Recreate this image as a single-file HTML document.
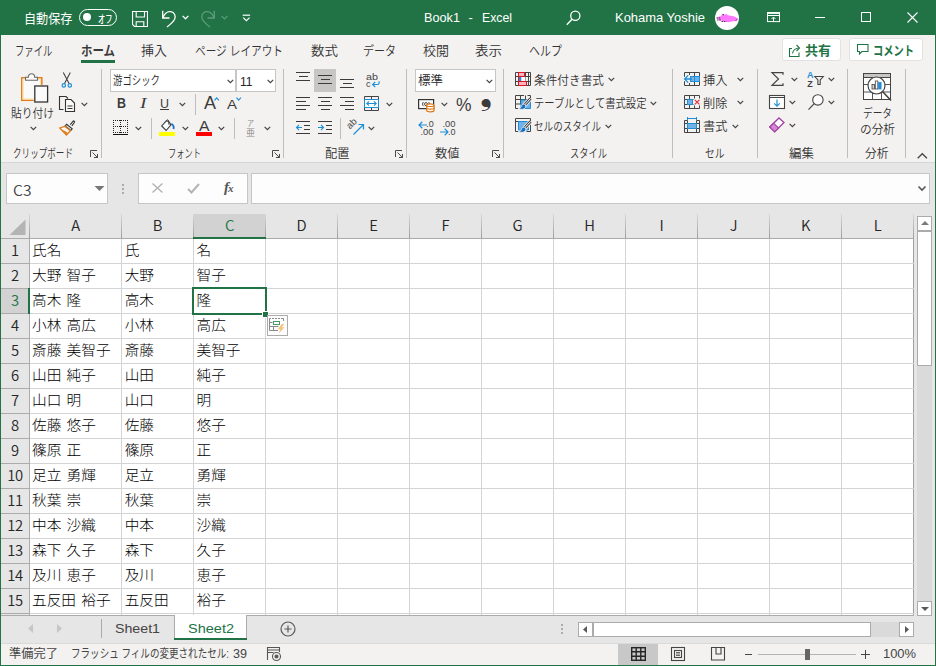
<!DOCTYPE html>
<html lang="ja"><head><meta charset="utf-8"><title>Book1 - Excel</title>
<style>
html,body{margin:0;padding:0;}
body{width:936px;height:666px;overflow:hidden;background:#f3f2f1;font-family:"Liberation Sans","Noto Sans CJK JP",sans-serif;font-size:12px;color:#262626;}
#win{position:relative;width:936px;height:666px;overflow:hidden;background:#f3f2f1;}
.abs{position:absolute;}
.t{position:absolute;white-space:nowrap;line-height:1;transform-origin:0 50%;}
svg{position:absolute;overflow:visible;}
/* title bar */
#title{position:absolute;left:0;top:0;width:936px;height:35px;background:#217346;color:#fff;}
/* tabs */
#tabs{position:absolute;left:0;top:35px;width:936px;height:31px;background:#f3f2f1;}
#tabs .t{font-size:13px;color:#333;font-weight:350;}
/* ribbon */
#ribbon{position:absolute;left:0;top:66px;width:936px;height:96px;background:#f3f2f1;}
#ribbon .t{font-size:12px;color:#333;font-weight:350;}
.sep{position:absolute;width:1px;background:#c8c6c4;}
.caret{position:absolute;}
/* formula bar */
#fbar{position:absolute;left:0;top:162px;width:936px;height:52px;background:#e6e6e6;}
/* grid */
#grid{position:absolute;left:0;top:214px;width:914px;height:401px;background:#fff;overflow:hidden;}
.ch{position:absolute;top:0;height:24px;background:#e6e6e6;font-family:'Noto Sans CJK JP',sans-serif;font-weight:350;font-size:14.8px;line-height:21px;text-align:center;color:#262626;letter-spacing:-0.3px;}
.rh{position:absolute;left:1px;width:28px;height:24px;background:#e6e6e6;font-family:'Noto Sans CJK JP',sans-serif;font-weight:350;font-size:14.8px;line-height:21px;text-align:center;color:#262626;letter-spacing:-0.3px;}
.cell{position:absolute;transform:scaleY(0.95);transform-origin:0 0;word-spacing:1.2px;font-size:14.67px;font-weight:300;line-height:24px;white-space:nowrap;color:#000;font-family:"Liberation Sans","Noto Sans CJK JP",sans-serif;}
.vl{position:absolute;width:1px;background:#d4d4d4;}
.hl{position:absolute;height:1px;background:#d4d4d4;}
/* borders */
.edge{position:absolute;background:#217346;}

</style></head>
<body>
<div id="win">
<div id="title">
  <span class="t" style="transform:scaleX(0.932);left:24px;top:12px;font-size:13px;">自動保存</span>
  <div class="abs" style="left:79px;top:9px;width:36px;height:15px;border:1px solid #fff;border-radius:9px;"></div>
  <div class="abs" style="left:83px;top:13px;width:8px;height:8px;border-radius:50%;background:#fff;"></div>
  <span class="t" style="transform:scaleX(0.690);left:97.5px;top:13.5px;font-size:10.5px;font-weight:500;">オフ</span>
  <!-- save -->
  <svg style="left:132px;top:11px" width="16" height="16" viewBox="0 0 16 16" fill="none" stroke="#fff" stroke-width="1.1">
    <path d="M0.550 0.550h14.900v14.900h-12.900l-2-2z"/><path d="M4.200 0.550v5.500h8.300v-5.500"/><path d="M4.200 15.450v-4.700h7.600v4.700"/>
  </svg>
  <!-- undo -->
  <svg style="left:161px;top:10px" width="16" height="18" viewBox="0 0 16 18" fill="none" stroke="#fff" stroke-width="1.3">
    <path d="M1.700 0.800v7.200h6.800"/><path d="M1.900 7.800C3.500 3.600 6.700 1.200 9.800 1.700c3.600 0.600 5.500 4.300 3.700 7.800C12 12.200 9.300 14.500 6 17"/>
  </svg>
  <svg style="left:182px;top:15px" width="7" height="5" viewBox="0 0 7 5" fill="none" stroke="#fff" stroke-width="1.300"><path d="M0.600 0.900l2.900 2.900l2.900-2.900"/></svg>
  <!-- redo (dim) -->
  <svg style="left:200px;top:10px" width="16" height="18" viewBox="0 0 16 18" fill="none" stroke="#5f9c7c" stroke-width="1.3">
    <path d="M14.300 0.800v7.200h-6.800"/><path d="M14.100 7.800C12.500 3.600 9.300 1.200 6.200 1.700c-3.600 0.600-5.500 4.300-3.700 7.800C4 12.200 6.700 14.500 10 17"/>
  </svg>
  <svg style="left:221px;top:15px" width="7" height="5" viewBox="0 0 7 5" fill="none" stroke="#5f9c7c" stroke-width="1.200"><path d="M0.600 0.900l2.900 2.900l2.900-2.900"/></svg>
  <!-- customize QAT -->
  <svg style="left:242px;top:14px" width="9" height="8" viewBox="0 0 9 8" fill="none" stroke="#fff" stroke-width="1.200"><path d="M0.700 1.200h7.400"/><path d="M1.200 3.600l3.200 3l3.200-3"/></svg>
  <span class="t" style="transform:scaleX(0.976);left:424px;top:11px;font-size:13px;">Book1</span>
  <span class="t" style="left:468.500px;top:11px;font-size:13px;">-</span>
  <span class="t" style="transform:scaleX(0.943);left:481.500px;top:11px;font-size:13px;">Excel</span>
  <!-- search -->
  <svg style="left:566px;top:10px" width="15" height="16" viewBox="0 0 15 16" fill="none" stroke="#fff" stroke-width="1.300"><circle cx="9.300" cy="5.700" r="4.600"/><path d="M6 9.200L0.800 14.800"/></svg>
  <span class="t" style="transform:scaleX(0.996);left:615px;top:11px;font-size:13px;">Kohama Yoshie</span>
  <!-- avatar -->
  <div class="abs" style="left:715px;top:6px;width:24px;height:24px;border-radius:50%;background:#fff;"></div>
  <svg style="left:715px;top:6px" width="24" height="24" viewBox="0 0 24 24"><path d="M1.500 12c0.500-1.500 3-1.200 4.500-1.800c0.500-1 1-2.500 2-2.500c0.800 0 1 1 1.800 1c0.800-0.800 1.500-0.800 2.200 0c1 0.500 2 0.500 3 1c2 0 4 0.500 5.500 1.500c1.500 0.500 3 1.200 3 2.300c-1 1-2.500 1-3.500 1.500c-1.500 0.500-3 0.200-4.500 0.700c-1.500 0.800-3 0.300-4.500 0c-2 0.300-3.500-0.200-4.500-1.200c-1.500 0-3-0.300-4-0.800c0.500-0.500 1-0.600 1.500-0.800c-1-0.200-2-0.300-2.500-0.900z" fill="#ff76ff"/><path d="M1.500 12h4.500M2 14h4M7.500 8.500l1.500 0.500M6.500 15.500h5M20.500 14.500l2-1" stroke="#1a1a1a" stroke-width="0.800" stroke-dasharray="1.500 0.800"/></svg>
  <!-- ribbon display options -->
  <svg style="left:767px;top:12px" width="14" height="11" viewBox="0 0 14 11" fill="none" stroke="#fff" stroke-width="1"><rect x="0.500" y="0.600" width="12" height="9"/><path d="M0.500 1.200h12" stroke-width="1.400"/><path d="M0.500 3.500h12"/><path d="M6.500 9.500v-4M4.500 7l2-2l2 2"/></svg>
  <!-- min / max / close -->
  <div class="abs" style="left:815px;top:17px;width:10px;height:1px;background:#fff;"></div>
  <div class="abs" style="left:861px;top:12px;width:8px;height:8px;border:1px solid #fff;"></div>
  <svg style="left:907px;top:12px" width="11" height="11" viewBox="0 0 11 11" fill="none" stroke="#fff" stroke-width="1.100"><path d="M0.500 0.500l10 10M10.500 0.500l-10 10"/></svg>
</div>

<div id="tabs">
  <span class="t" style="transform:scaleX(0.721);left:14.5px;top:9px;">ファイル</span>
  <span class="t" style="transform:scaleX(0.880);left:81px;top:9px;font-weight:bold;color:#3b3b3b;">ホーム</span>
  <div class="abs" style="left:81px;top:25px;width:34px;height:3px;background:#217346;"></div>
  <span class="t" style="transform:scaleX(0.999);left:141px;top:9px;">挿入</span>
  <span class="t" style="transform:scaleX(0.820);left:195px;top:9px;">ページ レイアウト</span>
  <span class="t" style="transform:scaleX(1.038);left:311px;top:9px;">数式</span>
  <span class="t" style="transform:scaleX(0.846);left:363px;top:9px;">データ</span>
  <span class="t" style="transform:scaleX(0.999);left:423px;top:9px;">校閲</span>
  <span class="t" style="transform:scaleX(1.038);left:475px;top:9px;">表示</span>
  <span class="t" style="transform:scaleX(0.846);left:529px;top:9px;">ヘルプ</span>
  <div class="abs" style="left:782px;top:3px;width:57px;height:21px;background:#fff;border:1px solid #e4e2e0;border-radius:3px;"></div>
  <svg style="left:789px;top:9px" width="13" height="13" viewBox="0 0 13 13" fill="none" stroke="#217346" stroke-width="1.100"><path d="M3 4.500h-2.500v8h9.500v-4"/><path d="M3.500 9.500c0.500-3 2.500-5 6-5.500"/><path d="M7.500 1l3 3l-3 3"/></svg>
  <span class="t" style="transform:scaleX(0.999);left:805px;top:9px;font-weight:bold;color:#217346;">共有</span>
  <div class="abs" style="left:849px;top:3px;width:72px;height:21px;background:#fff;border:1px solid #e4e2e0;border-radius:3px;"></div>
  <svg style="left:857px;top:9px" width="12" height="12" viewBox="0 0 12 12" fill="none" stroke="#217346" stroke-width="1.100"><path d="M0.500 0.500h10.500v7h-6l-2.500 2.500v-2.500h-2z"/></svg>
  <span class="t" style="transform:scaleX(0.788);left:873px;top:9px;font-weight:bold;color:#217346;">コメント</span>
</div>

<div id="ribbon">
<svg style="left:21px;top:7px" width="28" height="30" viewBox="0 0 28 30" fill="none"><rect x="0.8" y="4.8" width="20" height="22.5" fill="#fafafa" stroke="#e07b1a" stroke-width="1.5"/><rect x="2.1" y="6.1" width="17.4" height="19.9" stroke="#fbe0a6" stroke-width="1.2"/><path d="M4.5 7.3v-3h2.8c0-2.2 1.4-3.6 3.2-3.6c1.8 0 3.2 1.4 3.2 3.6h2.8v3z" fill="#fafafa" stroke="#6a6a6a" stroke-width="1.1"/><rect x="12.7" y="11.9" width="15" height="18" fill="#f3f2f1" stroke="none"/><rect x="13.8" y="13" width="12.8" height="16" fill="#fafafa" stroke="#333" stroke-width="1.3"/></svg>
<span class="t" style="transform:scaleX(0.896);left:11px;top:41.8px;font-size:12px;">貼り付け</span>
<svg style="left:30.4px;top:59.9px" width="7" height="5" viewBox="0 0 7 5" fill="none" stroke="#444" stroke-width="1.2"><path d="M0.6 0.8l2.8 2.8l2.8-2.8"/></svg>
<svg style="left:61px;top:6px" width="12" height="16" viewBox="0 0 12 16" fill="none"><path d="M2.3 0.5l5.9 11.3M9.3 0.5l-5.9 11.3" stroke="#444" stroke-width="1.1"/><circle cx="2.8" cy="13.4" r="1.7" stroke="#1e8fd5" stroke-width="1.2"/><circle cx="8.8" cy="13.4" r="1.7" stroke="#1e8fd5" stroke-width="1.2"/></svg>
<svg style="left:59px;top:29.5px" width="16" height="16" viewBox="0 0 16 16" fill="none"><path d="M4.5 13.5h-4v-13h6.5l2 2" stroke="#333" stroke-width="1.1"/><path d="M6.5 3.5h5.5l3.5 3.5v8.5h-9z" fill="#fafafa" stroke="#333" stroke-width="1.1"/><path d="M8.5 10h5M8.5 12.5h5" stroke="#333" stroke-width="1"/></svg>
<svg style="left:81.4px;top:36px" width="7" height="5" viewBox="0 0 7 5" fill="none" stroke="#444" stroke-width="1.2"><path d="M0.6 0.8l2.8 2.8l2.8-2.8"/></svg>
<svg style="left:59px;top:53.5px" width="17" height="16" viewBox="0 0 17 16" fill="none"><path d="M11.3 4.6l2.9-3.5c0.5-0.5 1.7 0.5 1.3 1.1l-2.6 3.7" fill="#fafafa" stroke="#333" stroke-width="1.1"/><path d="M7.6 4.2l5.6 4.6l-1.4 1.7l-5.6-4.6z" fill="#fafafa" stroke="#333" stroke-width="1.1"/><path d="M5.8 6.3l-5 1.7l6.6 7l4-4.2z" fill="#fafafa" stroke="#e07b1a" stroke-width="1.3"/><path d="M2.5 9.2l6 3.3l-1.3 2z" fill="#e07b1a" stroke="none"/></svg>
<span class="t" style="transform:scaleX(0.714);left:13px;top:82px;font-size:12px;">クリップボード</span>
<svg style="left:90px;top:84px" width="8" height="8" viewBox="0 0 8 8" fill="none" stroke="#4a4a4a" stroke-width="1"><path d="M0.5 7v-6.5h6.5"/><path d="M2.5 2.5l5 5M4 7.5h3.5v-3.5"/></svg>
<div class="sep" style="left:101px;top:3px;height:89px;background:#bfbdbb;"></div>
<div class="abs" style="left:110px;top:3px;width:126px;height:23px;background:#fff;border:1px solid #c6c6c6;box-sizing:border-box;"></div>
<div class="abs" style="left:236px;top:3px;width:40px;height:23px;background:#fff;border:1px solid #c6c6c6;box-sizing:border-box;"></div>
<span class="t" style="transform:scaleX(0.752);left:112.5px;top:8.5px;font-size:12.5px;color:#262626;">游ゴシック</span>
<svg style="left:226.7px;top:12.8px" width="7" height="5" viewBox="0 0 7 5" fill="none" stroke="#444" stroke-width="1.2"><path d="M0.6 0.8l2.8 2.8l2.8-2.8"/></svg>
<span class="t" style="transform:scaleX(0.926);left:239.5px;top:8.5px;font-size:13px;color:#262626;">11</span>
<svg style="left:266.7px;top:12.8px" width="7" height="5" viewBox="0 0 7 5" fill="none" stroke="#444" stroke-width="1.2"><path d="M0.6 0.8l2.8 2.8l2.8-2.8"/></svg>
<span class="t" style="transform:scaleX(0.858);left:117px;top:30px;font-size:14.5px;font-weight:bold;color:#3b3b3b;">B</span>
<span class="t" style="transform:scaleX(1.342);left:140px;top:30px;font-size:14.5px;font-style:italic;font-family:'Liberation Serif',serif;color:#3b3b3b;">I</span>
<span class="t" style="transform:scaleX(0.923);left:160px;top:30.5px;font-size:13.5px;color:#3b3b3b;">U</span>
<div class="abs" style="left:160px;top:43px;width:9px;height:1px;background:#3b3b3b;"></div>
<svg style="left:179.3px;top:35.5px" width="7" height="5" viewBox="0 0 7 5" fill="none" stroke="#444" stroke-width="1.2"><path d="M0.6 0.8l2.8 2.8l2.8-2.8"/></svg>
<div class="sep" style="left:195px;top:28px;height:21px;background:#bfbdbb;"></div>
<span class="t" style="transform:scaleX(1.027);left:203.5px;top:28.5px;font-size:17.5px;color:#3b3b3b;">A</span>
<svg style="left:214px;top:30.5px" width="6" height="4" viewBox="0 0 6 4" fill="none"><path d="M0.5 3.4l2.2-2.5l2.2 2.5" stroke="#1e8fd5" stroke-width="1.2"/></svg>
<span class="t" style="transform:scaleX(1.109);left:227px;top:32px;font-size:13.5px;color:#3b3b3b;">A</span>
<svg style="left:236px;top:30.5px" width="6" height="4" viewBox="0 0 6 4" fill="none"><path d="M0.5 0.6l2.2 2.5l2.2-2.5" stroke="#1e8fd5" stroke-width="1.2"/></svg>
<svg style="left:113px;top:54px" width="16" height="16" viewBox="0 0 16 16" fill="none" shape-rendering="crispEdges"><path d="M0 0.5h15M0 6.5h15M0 12.5h15" stroke="#222" stroke-width="1" stroke-dasharray="1 1"/><path d="M0.5 0v13M7.5 0v13M14.5 0v13" stroke="#222" stroke-width="1" stroke-dasharray="1 1"/><path d="M0 14.5h15" stroke="#111" stroke-width="1.3"/></svg>
<svg style="left:135.4px;top:60px" width="7" height="5" viewBox="0 0 7 5" fill="none" stroke="#444" stroke-width="1.2"><path d="M0.6 0.8l2.8 2.8l2.8-2.8"/></svg>
<div class="sep" style="left:151px;top:52px;height:20.5px;background:#bfbdbb;"></div>
<svg style="left:159px;top:53px" width="16" height="17" viewBox="0 0 16 17" fill="none"><path d="M7.3 1.8l-4.6 5.2l4.4 4.5l4.7-5.3c-0.5-2.2-2-4-4.5-4.4z" fill="#fdfdfd" stroke="#3b3b3b" stroke-width="1.1"/><path d="M7.3 1.8c0.5-1.3 2-1.3 2.3 0l0.4 4" stroke="#3b3b3b" stroke-width="1"/><path d="M12.3 4.8c2 1.2 2.8 3 2.2 5.2" stroke="#1a6fc4" stroke-width="1.8"/><rect x="0" y="13" width="16" height="4" fill="#ffff00" stroke="none"/></svg>
<svg style="left:181.5px;top:60px" width="7" height="5" viewBox="0 0 7 5" fill="none" stroke="#444" stroke-width="1.2"><path d="M0.6 0.8l2.8 2.8l2.8-2.8"/></svg>
<span class="t" style="transform:scaleX(1.086);left:199px;top:52.5px;font-size:14.5px;color:#3b3b3b;">A</span>
<div class="abs" style="left:196px;top:66px;width:16px;height:4px;background:#f00;"></div>
<svg style="left:218.4px;top:60px" width="7" height="5" viewBox="0 0 7 5" fill="none" stroke="#444" stroke-width="1.2"><path d="M0.6 0.8l2.8 2.8l2.8-2.8"/></svg>
<div class="sep" style="left:234px;top:52px;height:20.5px;background:#bfbdbb;"></div>
<span class="t" style="transform:scaleX(0.875);left:246.5px;top:54px;font-size:8px;color:#8a8886;">ア</span>
<span class="t" style="transform:scaleX(0.998);left:245.5px;top:62.5px;font-size:9px;color:#8a8886;">亜</span>
<svg style="left:264.2px;top:60px" width="7" height="5" viewBox="0 0 7 5" fill="none" stroke="#444" stroke-width="1.2"><path d="M0.6 0.8l2.8 2.8l2.8-2.8"/></svg>
<span class="t" style="transform:scaleX(0.687);left:168px;top:82px;font-size:12px;">フォント</span>
<svg style="left:272px;top:84px" width="8" height="8" viewBox="0 0 8 8" fill="none" stroke="#4a4a4a" stroke-width="1"><path d="M0.5 7v-6.5h6.5"/><path d="M2.5 2.5l5 5M4 7.5h3.5v-3.5"/></svg>
<div class="sep" style="left:283px;top:3px;height:89px;background:#bfbdbb;"></div>
<div class="abs" style="left:314px;top:3px;width:22px;height:23px;background:#c8c6c4;"></div>
<div class="abs" style="left:296px;top:6px;width:14px;height:1px;background:#3b3b3b;"></div>
<div class="abs" style="left:298.5px;top:10px;width:9.5px;height:1px;background:#3b3b3b;"></div>
<div class="abs" style="left:296px;top:14px;width:14px;height:1px;background:#3b3b3b;"></div>
<div class="abs" style="left:318px;top:9px;width:14px;height:1px;background:#3b3b3b;"></div>
<div class="abs" style="left:320.5px;top:13px;width:9.5px;height:1px;background:#3b3b3b;"></div>
<div class="abs" style="left:318px;top:17px;width:14px;height:1px;background:#3b3b3b;"></div>
<div class="abs" style="left:340px;top:13px;width:14px;height:1px;background:#3b3b3b;"></div>
<div class="abs" style="left:342.5px;top:17px;width:9.5px;height:1px;background:#3b3b3b;"></div>
<div class="abs" style="left:340px;top:21px;width:14px;height:1px;background:#3b3b3b;"></div>
<svg style="left:366px;top:6.5px" width="15" height="16" viewBox="0 0 15 16" fill="none"><text x="0" y="7" font-size="9" fill="#444" stroke="none" font-family="Liberation Sans,sans-serif" textLength="12" lengthAdjust="spacingAndGlyphs">ab</text><text x="0" y="14" font-size="9" fill="#444" stroke="none" font-family="Liberation Sans,sans-serif">c</text><path d="M12.8 8.3c0.8 1.3 0.4 3.2-1.5 3.2h-4.5" stroke="#1e8fd5" stroke-width="1.2"/><path d="M9.3 8.8l-2.7 2.7l2.7 2.7" stroke="#1e8fd5" stroke-width="1.2"/></svg>
<div class="abs" style="left:296px;top:31px;width:14px;height:1px;background:#3b3b3b;"></div>
<div class="abs" style="left:296px;top:35px;width:9.5px;height:1px;background:#3b3b3b;"></div>
<div class="abs" style="left:296px;top:39px;width:14px;height:1px;background:#3b3b3b;"></div>
<div class="abs" style="left:296px;top:43px;width:9.5px;height:1px;background:#3b3b3b;"></div>
<div class="abs" style="left:318px;top:31px;width:14px;height:1px;background:#3b3b3b;"></div>
<div class="abs" style="left:320.5px;top:35px;width:9.5px;height:1px;background:#3b3b3b;"></div>
<div class="abs" style="left:318px;top:39px;width:14px;height:1px;background:#3b3b3b;"></div>
<div class="abs" style="left:320.5px;top:43px;width:9.5px;height:1px;background:#3b3b3b;"></div>
<div class="abs" style="left:340px;top:31px;width:14px;height:1px;background:#3b3b3b;"></div>
<div class="abs" style="left:344.5px;top:35px;width:9.5px;height:1px;background:#3b3b3b;"></div>
<div class="abs" style="left:340px;top:39px;width:14px;height:1px;background:#3b3b3b;"></div>
<div class="abs" style="left:344.5px;top:43px;width:9.5px;height:1px;background:#3b3b3b;"></div>
<svg style="left:364px;top:30px" width="15" height="15" viewBox="0 0 15 15" fill="none"><path d="M0.5 3.5v-3h14v3M0.5 11.5v3h14v-3M7.5 0.5v3M7.5 11.5v3" stroke="#444" stroke-width="1"/><rect x="0.5" y="3.5" width="14" height="8" fill="#fdfdfd" stroke="#1e8fd5" stroke-width="1"/><path d="M2.8 7.5h9.4M5 5.3l-2.2 2.2l2.2 2.2M10 5.3l2.2 2.2l-2.2 2.2" stroke="#1e8fd5" stroke-width="1.1"/></svg>
<svg style="left:386.4px;top:35.7px" width="7" height="5" viewBox="0 0 7 5" fill="none" stroke="#444" stroke-width="1.2"><path d="M0.6 0.8l2.8 2.8l2.8-2.8"/></svg>
<div class="abs" style="left:296px;top:55px;width:14px;height:1px;background:#3b3b3b;"></div>
<div class="abs" style="left:304px;top:59px;width:6px;height:1px;background:#3b3b3b;"></div>
<div class="abs" style="left:304px;top:63px;width:6px;height:1px;background:#3b3b3b;"></div>
<div class="abs" style="left:296px;top:67px;width:14px;height:1px;background:#3b3b3b;"></div>
<svg style="left:296px;top:58px" width="7" height="8" viewBox="0 0 7 8" fill="none"><path d="M0.6 3.5h5.4M3 1l-2.5 2.5l2.5 2.5" stroke="#1e8fd5" stroke-width="1.1"/></svg>
<div class="abs" style="left:318px;top:55px;width:14px;height:1px;background:#3b3b3b;"></div>
<div class="abs" style="left:326px;top:59px;width:6px;height:1px;background:#3b3b3b;"></div>
<div class="abs" style="left:326px;top:63px;width:6px;height:1px;background:#3b3b3b;"></div>
<div class="abs" style="left:318px;top:67px;width:14px;height:1px;background:#3b3b3b;"></div>
<svg style="left:318px;top:58px" width="7" height="8" viewBox="0 0 7 8" fill="none"><path d="M0 3.5h5.4M3 1l2.5 2.5l-2.5 2.5" stroke="#1e8fd5" stroke-width="1.1"/></svg>
<div class="sep" style="left:340px;top:52px;height:20.5px;background:#bfbdbb;"></div>
<svg style="left:347px;top:53px" width="18" height="17" viewBox="0 0 18 17" fill="none"><text x="0" y="0" font-size="9.5" fill="#444" stroke="none" font-family="Liberation Sans,sans-serif" transform="translate(3,10.5) rotate(-45)">ab</text><path d="M6.5 15.5l9.5-9.5M11.5 5.5h5v5" stroke="#1e8fd5" stroke-width="1.2"/></svg>
<svg style="left:368.4px;top:59.7px" width="7" height="5" viewBox="0 0 7 5" fill="none" stroke="#444" stroke-width="1.2"><path d="M0.6 0.8l2.8 2.8l2.8-2.8"/></svg>
<span class="t" style="transform:scaleX(1.020);left:325px;top:82px;font-size:12px;">配置</span>
<svg style="left:395px;top:84px" width="8" height="8" viewBox="0 0 8 8" fill="none" stroke="#4a4a4a" stroke-width="1"><path d="M0.5 7v-6.5h6.5"/><path d="M2.5 2.5l5 5M4 7.5h3.5v-3.5"/></svg>
<div class="sep" style="left:406px;top:3px;height:89px;background:#bfbdbb;"></div>
<div class="abs" style="left:415px;top:3px;width:81px;height:23px;background:#fff;border:1px solid #c6c6c6;box-sizing:border-box;"></div>
<span class="t" style="transform:scaleX(0.999);left:417.5px;top:8.5px;font-size:12.5px;color:#262626;">標準</span>
<svg style="left:486.2px;top:12.8px" width="7" height="5" viewBox="0 0 7 5" fill="none" stroke="#444" stroke-width="1.2"><path d="M0.6 0.8l2.8 2.8l2.8-2.8"/></svg>
<svg style="left:417.5px;top:32.5px" width="17" height="14" viewBox="0 0 17 14" fill="none"><rect x="0.6" y="0.6" width="15" height="9" stroke="#333" stroke-width="1.2" fill="#fdfdfd"/><path d="M5.5 3c-1.2 0.8-1.2 3.4 0 4.2M10.5 3c1.2 0.8 1.2 3.4 0 4.2" stroke="#333" stroke-width="0.9"/><circle cx="8" cy="5.1" r="1.5" stroke="#333" stroke-width="0.9"/><path d="M8.7 6.2c0-1.7 7.3-1.7 7.3 0v5.3c0 1.7-7.3 1.7-7.3 0z" fill="#fff" stroke="#e0730d" stroke-width="1.2"/><path d="M8.7 6.4c0 1.5 7.3 1.5 7.3 0M8.7 9c0 1.5 7.3 1.5 7.3 0" stroke="#e0730d" stroke-width="1.1"/></svg>
<svg style="left:440.5px;top:36px" width="7" height="5" viewBox="0 0 7 5" fill="none" stroke="#444" stroke-width="1.2"><path d="M0.6 0.8l2.8 2.8l2.8-2.8"/></svg>
<span class="t" style="transform:scaleX(0.942);left:455.5px;top:29.5px;font-size:18.5px;color:#3b3b3b;">%</span>
<span class="t" style="left:479.8px;top:12.5px;font-size:31px;font-family:'DejaVu Sans',sans-serif;color:#3b3b3b;">❟</span>
<svg style="left:417.5px;top:53.5px" width="17" height="16" viewBox="0 0 17 16" fill="none"><path d="M1 5h8M4.3 1.8l-3.3 3.2l3.3 3.2" stroke="#1e8fd5" stroke-width="1.2"/><text x="8.3" y="7.3" font-size="9" fill="#444" stroke="none" font-family="Liberation Sans,sans-serif" textLength="7.5" lengthAdjust="spacingAndGlyphs">.0</text><text x="2.5" y="15.3" font-size="9" fill="#444" stroke="none" font-family="Liberation Sans,sans-serif" textLength="13" lengthAdjust="spacingAndGlyphs">.00</text></svg>
<svg style="left:440px;top:53.5px" width="17" height="16" viewBox="0 0 17 16" fill="none"><text x="2.5" y="7.3" font-size="9" fill="#444" stroke="none" font-family="Liberation Sans,sans-serif" textLength="13" lengthAdjust="spacingAndGlyphs">.00</text><path d="M0 12h8M4.7 8.8l3.3 3.2l-3.3 3.2" stroke="#1e8fd5" stroke-width="1.2"/><text x="8" y="15.3" font-size="9" fill="#444" stroke="none" font-family="Liberation Sans,sans-serif" textLength="7.5" lengthAdjust="spacingAndGlyphs">.0</text></svg>
<span class="t" style="transform:scaleX(1.020);left:434.5px;top:82px;font-size:12px;">数値</span>
<svg style="left:492px;top:84px" width="8" height="8" viewBox="0 0 8 8" fill="none" stroke="#4a4a4a" stroke-width="1"><path d="M0.5 7v-6.5h6.5"/><path d="M2.5 2.5l5 5M4 7.5h3.5v-3.5"/></svg>
<div class="sep" style="left:503px;top:3px;height:89px;background:#bfbdbb;"></div>
<svg style="left:515px;top:6px" width="16" height="14" viewBox="0 0 16 14" fill="none"><path d="M0.5 0.5h15v13h-15zM0.5 4.5h15M0.5 9.5h15M3.5 0.5v13M10.5 0.5v13M13.5 0.5v13" stroke="#444" stroke-width="1"/><rect x="4" y="1" width="5" height="3" fill="#f9b4bd" stroke="none"/><rect x="4" y="10" width="7" height="3" fill="#f9b4bd" stroke="none"/><rect x="4" y="5" width="2.5" height="4" fill="#1e8fd5" stroke="none"/><rect x="6.5" y="5" width="4" height="4" fill="#fff" stroke="none"/><path d="M3.5 0.5h6v4h-6zM3.5 4.5v5M3.5 9.5h8v4h-8z" stroke="#e81123" stroke-width="1"/></svg>
<span class="t" style="transform:scaleX(0.972);left:533.5px;top:8.5px;font-size:12px;">条件付き書式</span>
<svg style="left:607.9px;top:11px" width="7" height="5" viewBox="0 0 7 5" fill="none" stroke="#444" stroke-width="1.2"><path d="M0.6 0.8l2.8 2.8l2.8-2.8"/></svg>
<svg style="left:515px;top:29px" width="16" height="15" viewBox="0 0 16 15" fill="none"><path d="M9 0.5h-8.5v13h3M0.5 4.5h12M0.5 9h5M5.5 0.5v9M10.5 0.5v4M12.5 0.5h3v3" stroke="#444" stroke-width="1"/><path d="M6 5h9.5v8.5h-9.5z" fill="#6fb1e8" stroke="#1e8fd5" stroke-width="1"/><path d="M15.6 3.4l-6 6.6" stroke="#f3f2f1" stroke-width="4.4"/><path d="M15.6 3.4l-6 6.6" stroke="#444" stroke-width="2.8"/><path d="M15.6 3.4l-6 6.6" stroke="#fff" stroke-width="1"/><path d="M9.6 9.2c-2-0.5-3 1-3.2 2.2c-0.3 1.2-1.5 1.8-3.2 2c2.5 1.5 5.8 1.2 7.1-0.5c0.8-1 0.7-2.7-0.7-3.7z" fill="#1b6ec2" stroke="#f3f2f1" stroke-width="0.8"/></svg>
<span class="t" style="transform:scaleX(0.859);left:533.5px;top:32px;font-size:12px;">テーブルとして書式設定</span>
<svg style="left:650.3px;top:34.7px" width="7" height="5" viewBox="0 0 7 5" fill="none" stroke="#444" stroke-width="1.2"><path d="M0.6 0.8l2.8 2.8l2.8-2.8"/></svg>
<svg style="left:515px;top:52px" width="16" height="15" viewBox="0 0 16 15" fill="none"><path d="M0.5 0.5h15v13h-4M4 13.5h-3.5v-13M0.5 3.5h15" stroke="#444" stroke-width="1"/><path d="M3.5 3.5h10v8.5h-10z" fill="#6fb1e8" stroke="#1e8fd5" stroke-width="1"/><path d="M15.6 3.4l-6 6.6" stroke="#f3f2f1" stroke-width="4.4"/><path d="M15.6 3.4l-6 6.6" stroke="#444" stroke-width="2.8"/><path d="M15.6 3.4l-6 6.6" stroke="#fff" stroke-width="1"/><path d="M9.6 9.2c-2-0.5-3 1-3.2 2.2c-0.3 1.2-1.5 1.8-3.2 2c2.5 1.5 5.8 1.2 7.1-0.5c0.8-1 0.7-2.7-0.7-3.7z" fill="#1b6ec2" stroke="#f3f2f1" stroke-width="0.8"/></svg>
<span class="t" style="transform:scaleX(0.797);left:533.5px;top:55px;font-size:12px;">セルのスタイル</span>
<svg style="left:604.9px;top:57.7px" width="7" height="5" viewBox="0 0 7 5" fill="none" stroke="#444" stroke-width="1.2"><path d="M0.6 0.8l2.8 2.8l2.8-2.8"/></svg>
<span class="t" style="transform:scaleX(0.771);left:569.5px;top:82px;font-size:12px;">スタイル</span>
<div class="sep" style="left:672px;top:3px;height:89px;background:#bfbdbb;"></div>
<svg style="left:684px;top:6px" width="16" height="14" viewBox="0 0 16 14" fill="none"><path d="M0.5 4.5v-4h15v4M5.5 0.5v4M10.5 0.5v4M0.5 9.5v4h15v-4M5.5 9.5v4M10.5 9.5v4M0.5 9.5h1M0.5 4.5h1" stroke="#444" stroke-width="1"/><rect x="1" y="3" width="5" height="8" fill="#f3f2f1" stroke="none"/><rect x="6.5" y="4.5" width="9" height="5" fill="#6fb1e8" stroke="#1e8fd5" stroke-width="1"/><path d="M10.5 4.5v5" stroke="#1e8fd5" stroke-width="1"/><path d="M0.9 7h7M4.2 3.4l-3.6 3.6l3.6 3.6" stroke="#1e8fd5" stroke-width="1.3"/></svg>
<span class="t" style="transform:scaleX(1.020);left:703px;top:8.5px;font-size:12px;">挿入</span>
<svg style="left:737.4px;top:10.9px" width="7" height="5" viewBox="0 0 7 5" fill="none" stroke="#444" stroke-width="1.2"><path d="M0.6 0.8l2.8 2.8l2.8-2.8"/></svg>
<svg style="left:684px;top:29px" width="16" height="14" viewBox="0 0 16 14" fill="none"><path d="M0.5 4.5v-4h15v4M5.5 0.5v4M10.5 0.5v4M0.5 9.5v4h15v-4M5.5 9.5v4M10.5 9.5v4M0.5 4.5v5M0.5 9.5h15M0.5 4.5h15" stroke="#444" stroke-width="1"/><rect x="9.5" y="3.5" width="7" height="7" fill="#f3f2f1" stroke="none"/><rect x="3.5" y="4.5" width="5" height="5" fill="#6fb1e8" stroke="#1e8fd5" stroke-width="1"/><path d="M10.8 4.8l4.6 4.6M15.4 4.8l-4.6 4.6" stroke="#e8323c" stroke-width="1.2"/></svg>
<span class="t" style="transform:scaleX(1.020);left:703px;top:32px;font-size:12px;">削除</span>
<svg style="left:737.4px;top:33.9px" width="7" height="5" viewBox="0 0 7 5" fill="none" stroke="#444" stroke-width="1.2"><path d="M0.6 0.8l2.8 2.8l2.8-2.8"/></svg>
<svg style="left:684px;top:51px" width="16" height="16" viewBox="0 0 16 16" fill="none"><path d="M3.5 1.5h9M3.5 0v3M12.5 0v3" stroke="#1e8fd5" stroke-width="1"/><path d="M3.5 3.5h-3v12h15v-12h-3M0.5 6.5h15M0.5 11.5h15M3.5 3.5v12M12.5 3.5v12" stroke="#444" stroke-width="1"/><rect x="3.5" y="6.5" width="9" height="5" fill="#6fb1e8" stroke="#1e8fd5" stroke-width="1"/></svg>
<span class="t" style="transform:scaleX(1.020);left:703px;top:55px;font-size:12px;">書式</span>
<svg style="left:731.6px;top:58px" width="7" height="5" viewBox="0 0 7 5" fill="none" stroke="#444" stroke-width="1.2"><path d="M0.6 0.8l2.8 2.8l2.8-2.8"/></svg>
<span class="t" style="transform:scaleX(0.812);left:705px;top:82px;font-size:12px;">セル</span>
<div class="sep" style="left:757px;top:3px;height:89px;background:#bfbdbb;"></div>
<svg style="left:770.5px;top:6px" width="13" height="14" viewBox="0 0 13 14" fill="none"><path d="M12 2.8v-2.1h-11l6.5 6.3l-6.5 6.3h11v-2.1" stroke="#444" stroke-width="1.2"/></svg>
<svg style="left:791.4px;top:10.9px" width="7" height="5" viewBox="0 0 7 5" fill="none" stroke="#444" stroke-width="1.2"><path d="M0.6 0.8l2.8 2.8l2.8-2.8"/></svg>
<svg style="left:806.5px;top:4.5px" width="18" height="17" viewBox="0 0 18 17" fill="none"><text x="0" y="7" font-size="9" font-weight="bold" fill="#1e8fd5" stroke="none" font-family="Liberation Sans,sans-serif">A</text><text x="0.3" y="16" font-size="9" font-weight="bold" fill="#444" stroke="none" font-family="Liberation Sans,sans-serif">Z</text><path d="M7.8 5.5h8.5l-3.1 3.5v4.5h-2.3v-4.5z" stroke="#444" stroke-width="1.1"/></svg>
<svg style="left:827.7px;top:10.9px" width="7" height="5" viewBox="0 0 7 5" fill="none" stroke="#444" stroke-width="1.2"><path d="M0.6 0.8l2.8 2.8l2.8-2.8"/></svg>
<svg style="left:769px;top:29px" width="16" height="14" viewBox="0 0 16 14" fill="none"><rect x="0.5" y="0.5" width="15" height="13" stroke="#444" stroke-width="1.1" fill="#fff"/><path d="M0.5 2.5h15" stroke="#444" stroke-width="1"/><path d="M8 4.5v6.5M5.2 8.3l2.8 2.8l2.8-2.8" stroke="#1e8fd5" stroke-width="1.2"/></svg>
<svg style="left:789.1px;top:33.9px" width="7" height="5" viewBox="0 0 7 5" fill="none" stroke="#444" stroke-width="1.2"><path d="M0.6 0.8l2.8 2.8l2.8-2.8"/></svg>
<svg style="left:807.5px;top:27.5px" width="17" height="17" viewBox="0 0 17 17" fill="none"><circle cx="9.9" cy="5.9" r="5.2" stroke="#444" stroke-width="1.1" fill="#fdfdfd"/><path d="M6.2 9.7l-5.7 5.9" stroke="#444" stroke-width="1.2"/></svg>
<svg style="left:827.7px;top:33.9px" width="7" height="5" viewBox="0 0 7 5" fill="none" stroke="#444" stroke-width="1.2"><path d="M0.6 0.8l2.8 2.8l2.8-2.8"/></svg>
<svg style="left:769px;top:51px" width="16" height="16" viewBox="0 0 16 16" fill="none"><path d="M0.8 10l9.2-9l5 4.5l-9.3 9.3z" fill="#fdfdfd" stroke="#a240a2" stroke-width="1.3"/><path d="M0.8 10l3.8-3.8l5 4.8l-3.9 3.8z" fill="#d587d5" stroke="#a240a2" stroke-width="1.1"/></svg>
<svg style="left:789.1px;top:57px" width="7" height="5" viewBox="0 0 7 5" fill="none" stroke="#444" stroke-width="1.2"><path d="M0.6 0.8l2.8 2.8l2.8-2.8"/></svg>
<span class="t" style="transform:scaleX(1.041);left:789px;top:82px;font-size:12px;">編集</span>
<div class="sep" style="left:847px;top:3px;height:89px;background:#bfbdbb;"></div>
<svg style="left:862.5px;top:6.5px" width="29" height="29" viewBox="0 0 29 29" fill="none"><rect x="0.5" y="0.5" width="27" height="26" stroke="#444" stroke-width="1" fill="#fff"/><rect x="0.5" y="0.5" width="27" height="4" fill="#c8c6c4" stroke="#444" stroke-width="1"/><path d="M0.5 11.5h27M0.5 19h27M9.5 4.5v22M18.5 4.5v22" stroke="#444" stroke-width="0.9"/><circle cx="13.5" cy="12.5" r="8.5" fill="#fff" stroke="#444" stroke-width="1.2"/><rect x="9" y="11.5" width="2.5" height="4.5" fill="#d0d0d0" stroke="#444" stroke-width="0.8"/><rect x="12.3" y="8" width="2.5" height="8" fill="#fff" stroke="#444" stroke-width="0.8"/><rect x="15.6" y="9.5" width="2.5" height="6.5" fill="#2b88d8" stroke="#1e8fd5" stroke-width="0.8"/><path d="M19.5 18.5l8.5 9" stroke="#444" stroke-width="1.6"/></svg>
<span class="t" style="transform:scaleX(0.805);left:862.5px;top:42px;font-size:12px;">データ</span>
<span class="t" style="transform:scaleX(0.972);left:859.5px;top:57.5px;font-size:12px;">の分析</span>
<span class="t" style="transform:scaleX(0.979);left:864.5px;top:82px;font-size:12px;">分析</span>
<div class="sep" style="left:905px;top:3px;height:89px;background:#bfbdbb;"></div>
<svg style="left:916.5px;top:86.5px" width="11" height="6" viewBox="0 0 11 6" fill="none"><path d="M0.7 5.3l4.6-4.6l4.6 4.6" stroke="#444" stroke-width="1.3"/></svg>
</div>
<div id="fbar">
  <div class="abs" style="left:0;top:0;width:936px;height:1px;background:#d6d6d6;"></div>
  <!-- name box -->
  <div class="abs" style="left:6px;top:11px;width:100px;height:29px;background:#fdfdfd;border:1px solid #c6c6c6;"></div>
  <span class="t" style="transform:scaleX(1.042);left:13px;top:19.5px;font-size:15px;font-family:'Noto Sans CJK JP',sans-serif;font-weight:350;color:#444;">C3</span>
  <svg style="left:94px;top:24px" width="11" height="5" viewBox="0 0 11 5"><path d="M0.500 0h10l-5 5z" fill="#777"/></svg>
  <div class="abs" style="left:122px;top:22px;width:2px;height:2px;background:#ababab;"></div>
  <div class="abs" style="left:122px;top:26px;width:2px;height:2px;background:#ababab;"></div>
  <div class="abs" style="left:122px;top:30px;width:2px;height:2px;background:#ababab;"></div>
  <!-- buttons -->
  <div class="abs" style="left:138px;top:11px;width:108px;height:29px;background:#fdfdfd;border:1px solid #c6c6c6;"></div>
  <svg style="left:151.5px;top:21px" width="11" height="10" viewBox="0 0 11 10" fill="none" stroke="#b4b4b4" stroke-width="1.500"><path d="M0.500 0.500l10 9M10.500 0.500l-10 9"/></svg>
  <svg style="left:187px;top:21px" width="13" height="11" viewBox="0 0 13 11" fill="none" stroke="#b4b4b4" stroke-width="2"><path d="M1 6l3.500 3.500l7.500-8.500"/></svg>
  <span class="t" style="left:224px;top:18px;font-size:15px;font-family:'Liberation Serif',serif;font-style:italic;font-weight:bold;color:#555;letter-spacing:-1px;">f<span style="font-size:11px;">x</span></span>
  <!-- formula input -->
  <div class="abs" style="left:251px;top:11px;width:677px;height:29px;background:#fdfdfd;border:1px solid #c6c6c6;"></div>
  <svg style="left:918px;top:24px" width="8" height="5" viewBox="0 0 8 5" fill="none" stroke="#555" stroke-width="1.600"><path d="M0.500 0.500l3.500 3.500l3.500-3.500"/></svg>
</div>

<div id="grid">
<div class="abs" style="left:0;top:0;width:914px;height:24px;background:#e6e6e6;"></div>
<div class="abs" style="left:1px;top:24px;width:28px;height:377px;background:#e6e6e6;"></div>
<svg style="left:9px;top:5px" width="17" height="16" viewBox="0 0 17 16"><path d="M16.500 0.500v15.500h-16z" fill="#b4b4b4"/></svg>
<div class="abs" style="left:194px;top:0;width:71px;height:24px;background:#d2d2d2;"></div>
<div class="abs" style="left:1px;top:75px;width:28px;height:24px;background:#d2d2d2;"></div>
<div class="ch" style="left:30px;width:91px;background:none;">A</div>
<div class="ch" style="left:122px;width:71px;background:none;">B</div>
<div class="ch" style="left:194px;width:71px;background:none;color:#217346;">C</div>
<div class="ch" style="left:266px;width:71px;background:none;">D</div>
<div class="ch" style="left:338px;width:71px;background:none;">E</div>
<div class="ch" style="left:410px;width:71px;background:none;">F</div>
<div class="ch" style="left:482px;width:71px;background:none;">G</div>
<div class="ch" style="left:554px;width:71px;background:none;">H</div>
<div class="ch" style="left:626px;width:71px;background:none;">I</div>
<div class="ch" style="left:698px;width:71px;background:none;">J</div>
<div class="ch" style="left:770px;width:71px;background:none;">K</div>
<div class="ch" style="left:842px;width:71px;background:none;">L</div>
<div class="vl" style="left:29px;top:0;height:24px;background:linear-gradient(#d8d8d8,#9c9c9c);"></div>
<div class="vl" style="left:121px;top:0;height:24px;background:linear-gradient(#d8d8d8,#9c9c9c);"></div>
<div class="vl" style="left:193px;top:0;height:24px;background:linear-gradient(#d8d8d8,#9c9c9c);"></div>
<div class="vl" style="left:265px;top:0;height:24px;background:linear-gradient(#d8d8d8,#9c9c9c);"></div>
<div class="vl" style="left:337px;top:0;height:24px;background:linear-gradient(#d8d8d8,#9c9c9c);"></div>
<div class="vl" style="left:409px;top:0;height:24px;background:linear-gradient(#d8d8d8,#9c9c9c);"></div>
<div class="vl" style="left:481px;top:0;height:24px;background:linear-gradient(#d8d8d8,#9c9c9c);"></div>
<div class="vl" style="left:553px;top:0;height:24px;background:linear-gradient(#d8d8d8,#9c9c9c);"></div>
<div class="vl" style="left:625px;top:0;height:24px;background:linear-gradient(#d8d8d8,#9c9c9c);"></div>
<div class="vl" style="left:697px;top:0;height:24px;background:linear-gradient(#d8d8d8,#9c9c9c);"></div>
<div class="vl" style="left:769px;top:0;height:24px;background:linear-gradient(#d8d8d8,#9c9c9c);"></div>
<div class="vl" style="left:841px;top:0;height:24px;background:linear-gradient(#d8d8d8,#9c9c9c);"></div>
<div class="vl" style="left:913px;top:0;height:24px;background:linear-gradient(#d8d8d8,#9c9c9c);"></div>
<div class="hl" style="left:1px;top:24px;width:913px;background:#ababab;"></div>
<div class="vl" style="left:121px;top:25px;height:376px;"></div>
<div class="vl" style="left:193px;top:25px;height:376px;"></div>
<div class="vl" style="left:265px;top:25px;height:376px;"></div>
<div class="vl" style="left:337px;top:25px;height:376px;"></div>
<div class="vl" style="left:409px;top:25px;height:376px;"></div>
<div class="vl" style="left:481px;top:25px;height:376px;"></div>
<div class="vl" style="left:553px;top:25px;height:376px;"></div>
<div class="vl" style="left:625px;top:25px;height:376px;"></div>
<div class="vl" style="left:697px;top:25px;height:376px;"></div>
<div class="vl" style="left:769px;top:25px;height:376px;"></div>
<div class="vl" style="left:841px;top:25px;height:376px;"></div>
<div class="vl" style="left:913px;top:25px;height:376px;background:#a0a0a0;"></div>
<div class="vl" style="left:29px;top:25px;height:376px;background:#ababab;"></div>
<div class="hl" style="left:30px;top:49px;width:884px;"></div>
<div class="hl" style="left:1px;top:49px;width:28px;background:#ababab;"></div>
<div class="hl" style="left:30px;top:74px;width:884px;"></div>
<div class="hl" style="left:1px;top:74px;width:28px;background:#ababab;"></div>
<div class="hl" style="left:30px;top:99px;width:884px;"></div>
<div class="hl" style="left:1px;top:99px;width:28px;background:#ababab;"></div>
<div class="hl" style="left:30px;top:124px;width:884px;"></div>
<div class="hl" style="left:1px;top:124px;width:28px;background:#ababab;"></div>
<div class="hl" style="left:30px;top:149px;width:884px;"></div>
<div class="hl" style="left:1px;top:149px;width:28px;background:#ababab;"></div>
<div class="hl" style="left:30px;top:174px;width:884px;"></div>
<div class="hl" style="left:1px;top:174px;width:28px;background:#ababab;"></div>
<div class="hl" style="left:30px;top:199px;width:884px;"></div>
<div class="hl" style="left:1px;top:199px;width:28px;background:#ababab;"></div>
<div class="hl" style="left:30px;top:224px;width:884px;"></div>
<div class="hl" style="left:1px;top:224px;width:28px;background:#ababab;"></div>
<div class="hl" style="left:30px;top:249px;width:884px;"></div>
<div class="hl" style="left:1px;top:249px;width:28px;background:#ababab;"></div>
<div class="hl" style="left:30px;top:274px;width:884px;"></div>
<div class="hl" style="left:1px;top:274px;width:28px;background:#ababab;"></div>
<div class="hl" style="left:30px;top:299px;width:884px;"></div>
<div class="hl" style="left:1px;top:299px;width:28px;background:#ababab;"></div>
<div class="hl" style="left:30px;top:324px;width:884px;"></div>
<div class="hl" style="left:1px;top:324px;width:28px;background:#ababab;"></div>
<div class="hl" style="left:30px;top:349px;width:884px;"></div>
<div class="hl" style="left:1px;top:349px;width:28px;background:#ababab;"></div>
<div class="hl" style="left:30px;top:374px;width:884px;"></div>
<div class="hl" style="left:1px;top:374px;width:28px;background:#ababab;"></div>
<div class="hl" style="left:30px;top:399px;width:884px;"></div>
<div class="hl" style="left:1px;top:399px;width:28px;background:#ababab;"></div>
<div class="rh" style="top:25px;background:none;">1</div>
<div class="rh" style="top:50px;background:none;">2</div>
<div class="rh" style="top:75px;background:none;color:#217346;">3</div>
<div class="rh" style="top:100px;background:none;">4</div>
<div class="rh" style="top:125px;background:none;">5</div>
<div class="rh" style="top:150px;background:none;">6</div>
<div class="rh" style="top:175px;background:none;">7</div>
<div class="rh" style="top:200px;background:none;">8</div>
<div class="rh" style="top:225px;background:none;">9</div>
<div class="rh" style="top:250px;background:none;">10</div>
<div class="rh" style="top:275px;background:none;">11</div>
<div class="rh" style="top:300px;background:none;">12</div>
<div class="rh" style="top:325px;background:none;">13</div>
<div class="rh" style="top:350px;background:none;">14</div>
<div class="rh" style="top:375px;background:none;">15</div>
<span class="cell" style="left:32px;top:25px;">氏名</span>
<span class="cell" style="left:124.7px;top:25px;">氏</span>
<span class="cell" style="left:196.5px;top:25px;">名</span>
<span class="cell" style="left:32px;top:50px;">大野 智子</span>
<span class="cell" style="left:124.7px;top:50px;">大野</span>
<span class="cell" style="left:196.5px;top:50px;">智子</span>
<span class="cell" style="left:32px;top:75px;">高木 隆</span>
<span class="cell" style="left:124.7px;top:75px;">高木</span>
<span class="cell" style="left:196.5px;top:75px;">隆</span>
<span class="cell" style="left:32px;top:100px;">小林 高広</span>
<span class="cell" style="left:124.7px;top:100px;">小林</span>
<span class="cell" style="left:196.5px;top:100px;">高広</span>
<span class="cell" style="left:32px;top:125px;">斎藤 美智子</span>
<span class="cell" style="left:124.7px;top:125px;">斎藤</span>
<span class="cell" style="left:196.5px;top:125px;">美智子</span>
<span class="cell" style="left:32px;top:150px;">山田 純子</span>
<span class="cell" style="left:124.7px;top:150px;">山田</span>
<span class="cell" style="left:196.5px;top:150px;">純子</span>
<span class="cell" style="left:32px;top:175px;">山口 明</span>
<span class="cell" style="left:124.7px;top:175px;">山口</span>
<span class="cell" style="left:196.5px;top:175px;">明</span>
<span class="cell" style="left:32px;top:200px;">佐藤 悠子</span>
<span class="cell" style="left:124.7px;top:200px;">佐藤</span>
<span class="cell" style="left:196.5px;top:200px;">悠子</span>
<span class="cell" style="left:32px;top:225px;">篠原 正</span>
<span class="cell" style="left:124.7px;top:225px;">篠原</span>
<span class="cell" style="left:196.5px;top:225px;">正</span>
<span class="cell" style="left:32px;top:250px;">足立 勇輝</span>
<span class="cell" style="left:124.7px;top:250px;">足立</span>
<span class="cell" style="left:196.5px;top:250px;">勇輝</span>
<span class="cell" style="left:32px;top:275px;">秋葉 崇</span>
<span class="cell" style="left:124.7px;top:275px;">秋葉</span>
<span class="cell" style="left:196.5px;top:275px;">崇</span>
<span class="cell" style="left:32px;top:300px;">中本 沙織</span>
<span class="cell" style="left:124.7px;top:300px;">中本</span>
<span class="cell" style="left:196.5px;top:300px;">沙織</span>
<span class="cell" style="left:32px;top:325px;">森下 久子</span>
<span class="cell" style="left:124.7px;top:325px;">森下</span>
<span class="cell" style="left:196.5px;top:325px;">久子</span>
<span class="cell" style="left:32px;top:350px;">及川 恵子</span>
<span class="cell" style="left:124.7px;top:350px;">及川</span>
<span class="cell" style="left:196.5px;top:350px;">恵子</span>
<span class="cell" style="left:32px;top:375px;">五反田 裕子</span>
<span class="cell" style="left:124.7px;top:375px;">五反田</span>
<span class="cell" style="left:196.5px;top:375px;">裕子</span>
<div class="abs" style="left:193px;top:23px;width:73px;height:2px;background:#217346;"></div>
<div class="abs" style="left:28px;top:74px;width:2px;height:26px;background:#217346;"></div>
<div class="abs" style="left:192px;top:73px;width:71px;height:24px;border:2px solid #217346;"></div>
<div class="abs" style="left:262px;top:97px;width:5px;height:5px;background:#217346;border:1px solid #fff;"></div>
<div class="abs" style="left:267px;top:101px;width:19px;height:19px;background:#fdfdfd;border:1px solid #ababab;"></div>
<svg style="left:269px;top:104px" width="16" height="16" viewBox="0 0 16 16" fill="none" stroke="#8a8a8a" stroke-width="1"><path d="M14.500 3v-2.500h-14v12h8.500M0.500 4.500h3M0.500 8.500h9M4.500 8.500v4" /><path d="M2 0.500h11" stroke="#fdfdfd" stroke-dasharray="1 2"/><rect x="4.500" y="3.500" width="6" height="3" stroke="#4c9a6a" fill="#fff"/><path d="M12.800 6l-4 5.200h2.600l-1.800 4.300l6-6.300h-2.700l2.300-3.200z" fill="#f4c27a" stroke="none"/></svg>
</div>
<!-- sheet tab row background -->
<div class="abs" style="left:0;top:615px;width:936px;height:28px;background:#e6e6e6;"></div>
<div class="abs" style="left:1px;top:615px;width:913px;height:1px;background:#ababab;"></div>
<!-- vertical scrollbar -->
<div class="abs" style="left:914px;top:214px;width:21px;height:401px;background:#e6e6e6;"></div>
<div class="abs" style="left:917px;top:231px;width:15px;height:371px;background:#dadada;"></div>
<div class="abs" style="left:917px;top:216px;width:13px;height:13px;background:#fff;border:1px solid #ababab;"></div>
<svg style="left:920.500px;top:221px" width="8" height="4" viewBox="0 0 8 4"><path d="M0 4l4-4l4 4z" fill="#7a7a7a"/></svg>
<div class="abs" style="left:917px;top:231px;width:13px;height:133px;background:#fff;border:1px solid #ababab;"></div>
<div class="abs" style="left:917px;top:601px;width:13px;height:13px;background:#fff;border:1px solid #ababab;"></div>
<svg style="left:920.500px;top:606.500px" width="8" height="4" viewBox="0 0 8 4"><path d="M0 0l4 4l4-4z" fill="#5a5a5a"/></svg>
<!-- sheet tab row -->
<svg style="left:28px;top:624px" width="5" height="9" viewBox="0 0 5 9"><path d="M5 0v9l-5-4.500z" fill="#c6c6c6"/></svg>
<svg style="left:57px;top:624px" width="5" height="9" viewBox="0 0 5 9"><path d="M0 0v9l5-4.500z" fill="#c6c6c6"/></svg>
<div class="abs" style="left:101px;top:619px;width:1px;height:19px;background:#ababab;"></div>
<span class="t" style="transform:scaleX(1.092);left:115px;top:622px;font-size:13px;color:#444;">Sheet1</span>
<div class="abs" style="left:174px;top:615px;width:73px;height:24px;background:#fff;border-left:1px solid #ababab;border-right:1px solid #ababab;box-sizing:border-box;"></div>
<div class="abs" style="left:174px;top:638px;width:73px;height:2px;background:#217346;"></div>
<span class="t" style="transform:scaleX(1.116);left:188px;top:622px;font-size:13px;color:#217346;">Sheet2</span>
<svg style="left:280px;top:621px" width="16" height="16" viewBox="0 0 16 16" fill="none" stroke="#5a5a5a" stroke-width="1.200"><circle cx="8" cy="8" r="7"/><path d="M8 4.500v7M4.500 8h7"/></svg>
<!-- h scrollbar -->
<div class="abs" style="left:561px;top:624px;width:2px;height:2px;background:#ababab;"></div>
<div class="abs" style="left:561px;top:628px;width:2px;height:2px;background:#ababab;"></div>
<div class="abs" style="left:561px;top:632px;width:2px;height:2px;background:#ababab;"></div>
<div class="abs" style="left:593px;top:622px;width:306px;height:15px;background:#dadada;"></div>
<div class="abs" style="left:578px;top:622px;width:13px;height:13px;background:#fff;border:1px solid #ababab;"></div>
<svg style="left:583px;top:626px" width="4" height="7" viewBox="0 0 4 7"><path d="M4 0v7l-4-3.500z" fill="#5a5a5a"/></svg>
<div class="abs" style="left:593px;top:622px;width:276px;height:13px;background:#fff;border:1px solid #ababab;"></div>
<div class="abs" style="left:899px;top:622px;width:13px;height:13px;background:#fff;border:1px solid #ababab;"></div>
<svg style="left:904.500px;top:626px" width="4" height="7" viewBox="0 0 4 7"><path d="M0 0v7l4-3.500z" fill="#5a5a5a"/></svg>
<!-- status bar -->
<div class="abs" style="left:0;top:643px;width:936px;height:23px;background:#f3f2f1;"></div>
<div class="abs" style="left:0;top:643px;width:936px;height:1px;background:#d9d9d9;"></div>
<span class="t" style="transform:scaleX(1.021);left:9px;top:648px;font-size:12px;color:#444;">準備完了</span>
<span class="t" style="transform:scaleX(0.796);left:71px;top:648px;font-size:12px;color:#444;">フラッシュ フィルの変更されたセル:</span>
<span class="t" style="transform:scaleX(1.007);left:233px;top:648px;font-size:12.5px;color:#444;">39</span>
<svg style="left:267px;top:647px" width="15" height="14" viewBox="0 0 15 14" fill="none" stroke="#555" stroke-width="1.100"><path d="M0.500 13v-12.500h12v4.500M0.500 3h12M0.500 5.500h6"/><circle cx="9.500" cy="9.500" r="4"/><circle cx="9.500" cy="9.500" r="1.500" fill="#555"/></svg>
<div class="abs" style="left:618px;top:644px;width:40px;height:21px;background:#c8c8c8;"></div>
<svg style="left:631px;top:647px" width="15" height="14" viewBox="0 0 15 14" fill="none" stroke="#262626" stroke-width="1.400"><rect x="0.700" y="0.700" width="13.600" height="12.600"/><path d="M5.200 0.500v13M9.800 0.500v13M0.500 4.800h14M0.500 9.200h14"/></svg>
<svg style="left:671px;top:647px" width="14" height="14" viewBox="0 0 14 14" fill="none" stroke="#444" stroke-width="1.100"><rect x="0.500" y="0.500" width="13" height="13"/><rect x="3.500" y="3.500" width="7" height="7"/><path d="M5 5.500h4M5 7h4M5 8.500h4" stroke-width="0.800"/></svg>
<svg style="left:711px;top:647px" width="15" height="14" viewBox="0 0 15 14" fill="none" stroke="#444" stroke-width="1.100"><path d="M0.500 0.500h13v12.500h-13z"/><path d="M5 0.500v6.500h5v-6.500"/></svg>
<div class="abs" style="left:745px;top:654px;width:7px;height:1px;background:#444;"></div>
<div class="abs" style="left:758px;top:654px;width:98px;height:1px;background:#b4b4b4;"></div>
<div class="abs" style="left:805px;top:649px;width:5px;height:11px;background:#666;"></div>
<div class="abs" style="left:861px;top:654px;width:9px;height:1px;background:#444;"></div>
<div class="abs" style="left:865px;top:650px;width:1px;height:9px;background:#444;"></div>
<span class="t" style="transform:scaleX(1.075);left:883px;top:648px;font-size:12px;color:#444;">100%</span>
<!-- window edges -->
<div class="edge" style="left:0;top:35px;width:1px;height:631px;"></div>
<div class="edge" style="left:935px;top:35px;width:1px;height:631px;"></div>
<div class="edge" style="left:0;top:665px;width:936px;height:1px;"></div>

</div>
</body></html>
